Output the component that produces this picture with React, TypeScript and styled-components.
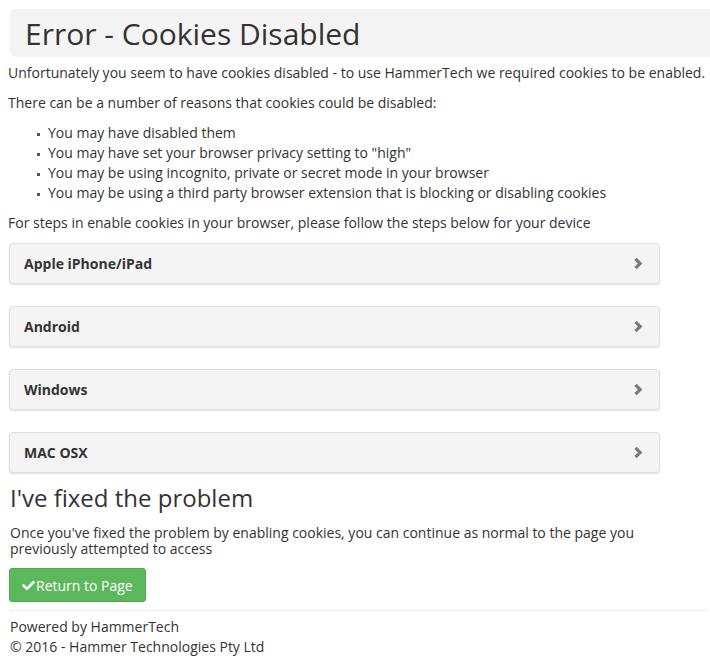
import React from "react";
import styled, { createGlobalStyle } from "styled-components";
import { FaCheck } from "react-icons/fa";

const Global = createGlobalStyle`
  body {
    margin: 0;
    background: #fff;
    font-family: "Open Sans", "Liberation Sans", sans-serif;
    font-size: 14px;
    color: #333;
  }
  * { box-sizing: border-box; }
`;

const Page = styled.div`
  padding: 9px 0 6px 8px;
`;

const TitleBox = styled.div`
  margin-left: 2px;
  height: 48px;
  background: #f4f4f4;
  border-radius: 6px 0 0 6px;
  display: flex;
  align-items: center;
  padding-left: 15px;
`;

const Title = styled.h1`
  margin: 0;
  font-size: 30px;
  font-weight: 400;
  color: #333;
`;

const Para = styled.p<{ $top?: number }>`
  margin: ${(p) => p.$top ?? 10}px 0 0;
  line-height: 20px;
`;

const List = styled.ul`
  list-style: none;
  margin: 10px 0 0;
  padding: 0 0 0 29px;
  li {
    line-height: 20px;
    position: relative;
    padding-left: 11px;
  }
  li::before {
    content: "";
    position: absolute;
    left: 0;
    top: 10px;
    width: 3px;
    height: 3px;
    background: #555;
  }
`;

const Panels = styled.div`
  margin-top: 10px;
  width: 651px;
  margin-left: 1px;
  display: flex;
  flex-direction: column;
  gap: 22px;
`;

const Panel = styled.div`
  height: 41px;
  background: #f4f4f4;
  border: 1px solid #e0e0e0;
  border-radius: 4px;
  box-shadow: 0 1px 2px rgba(0, 0, 0, 0.12);
  display: flex;
  align-items: center;
  justify-content: space-between;
  padding: 0 16px 0 14px;
  font-weight: 700;
  color: #333;
`;

const Chevron = () => (
  <svg width="10" height="13" viewBox="0 0 10 13">
    <polyline points="2.5,1.8 7.2,6.5 2.5,11.2" fill="none" stroke="#7a7a7a" strokeWidth="3.2" strokeLinejoin="miter" />
  </svg>
);

const SubTitle = styled.h2`
  margin: 11px 0 0 2px;
  font-size: 24px;
  font-weight: 400;
  line-height: 28px;
  color: #333;
`;

const Small = styled.p`
  margin: 13px 0 0 2px;
  line-height: 16px;
  width: 650px;
`;

const Button = styled.button`
  margin: 11px 0 0 1px;
  height: 34px;
  padding: 0 12px;
  background: #5cb85c;
  border: 1px solid #4cae4c;
  border-radius: 3px;
  color: #fff;
  font-family: inherit;
  font-size: 14px;
  display: flex;
  align-items: center;
  gap: 1px;
`;

const Rule = styled.hr`
  margin: 8px 3px 6px 2px;
  border: 0;
  border-top: 1px solid #eee;
`;

const Footer = styled.div`
  margin-left: 2px;
  line-height: 20px;
`;

const devices = ["Apple iPhone/iPad", "Android", "Windows", "MAC OSX"];

export default function App() {
  return (
    <Page>
      <Global />
      <TitleBox>
        <Title>Error - Cookies Disabled</Title>
      </TitleBox>
      <Para $top={6}>
        Unfortunately you seem to have cookies disabled - to use HammerTech we required cookies to be enabled.
      </Para>
      <Para>There can be a number of reasons that cookies could be disabled:</Para>
      <List>
        <li>You may have disabled them</li>
        <li>You may have set your browser privacy setting to "high"</li>
        <li>You may be using incognito, private or secret mode in your browser</li>
        <li>You may be using a third party browser extension that is blocking or disabling cookies</li>
      </List>
      <Para>For steps in enable cookies in your browser, please follow the steps below for your device</Para>
      <Panels>
        {devices.map((d) => (
          <Panel key={d}>
            <span>{d}</span>
            <Chevron />
          </Panel>
        ))}
      </Panels>
      <SubTitle>I've fixed the problem</SubTitle>
      <Small>
        Once you've fixed the problem by enabling cookies, you can continue as normal to the page you previously attempted to access
      </Small>
      <Button>
        <FaCheck size={13} />
        Return to Page
      </Button>
      <Rule />
      <Footer>
        Powered by HammerTech
        <br />© 2016 - Hammer Technologies Pty Ltd
      </Footer>
    </Page>
  );
}
